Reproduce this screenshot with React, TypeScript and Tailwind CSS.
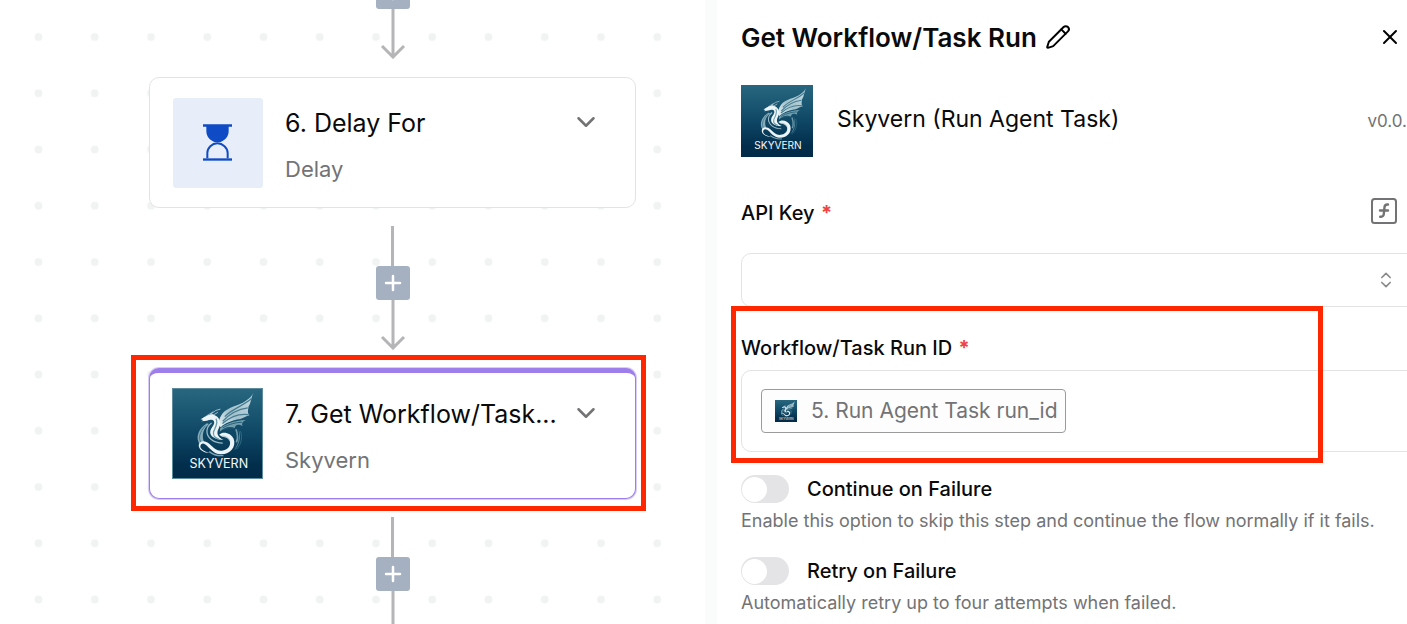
import React from 'react';
import { ChevronDown, ChevronsUpDown, Pencil, Plus, X } from 'lucide-react';

function SkyvernLogo({ className }: { className: string }) {
  return (
    <svg viewBox="0 0 270 270" className={className} role="img" aria-label="Skyvern">
      <defs>
        <linearGradient id="sky-bg" x1="0" y1="0" x2="0" y2="1">
          <stop offset="0" stopColor="#28677f" />
          <stop offset="0.5" stopColor="#0e4765" />
          <stop offset="0.85" stopColor="#022e4c" />
          <stop offset="1" stopColor="#022b48" />
        </linearGradient>
        <linearGradient id="sky-wing" x1="1" y1="0" x2="0" y2="1">
          <stop offset="0" stopColor="#c9dde4" />
          <stop offset="0.6" stopColor="#a3c2cd" />
          <stop offset="1" stopColor="#e9f3f6" />
        </linearGradient>
      </defs>
      <rect width="270" height="270" fill="url(#sky-bg)" />
      {/* ring behind the body */}
      <path d="M103 104C76 120 66 150 83 170C86 166 90 164 95 162C86 142 91 121 109 106Z" fill="#86acba" />
      <path d="M99 111C80 130 76 150 86 164" fill="none" stroke="#3d768d" strokeWidth="3" />
      <path d="M198 119C208 145 204 168 184 187C200 165 203 142 198 119Z" fill="#54879b" />
      <path d="M191 122C197 139 197 152 192 162" fill="none" stroke="#6f9bab" strokeWidth="5" />
      <path d="M205 128C212 150 206 170 192 183" fill="none" stroke="#2f6a83" strokeWidth="3" />
      {/* wing */}
      <path d="M244 11C234 32 210 44 185 52C170 58 158 64 150 74C143 83 139 95 137 108L145 116C156 104 178 95 204 91C216 88 220 82 232 80C224 72 229 60 229 53C237 43 236 26 244 11Z" fill="url(#sky-wing)" />
      <path d="M238 29C211 53 178 60 157 84M227 57C197 61 172 74 151 98M229 78C200 74 174 84 150 105" fill="none" stroke="#477d91" strokeWidth="4" />
      <path d="M143 119C160 106 184 96 221 94C210 99 208 105 211 112C193 103 188 112 187 119C171 111 155 118 142 130Z" fill="#719eae" />
      <path d="M151 118C170 106 194 101 209 101M153 123C168 117 178 116 185 119" fill="none" stroke="#255d76" strokeWidth="3" />
      {/* head and neck */}
      <path d="M84 92L96 84L108 79L119 76L131 82C143 90 146 105 139 119C131 133 134 145 153 154C131 156 111 144 113 130C114 116 129 109 124 97C120 91 110 93 103 96L86 98L92 94Z" fill="#edf5f7" />
      <path d="M130 90C139 102 128 117 123 130C120 141 129 149 139 152" fill="none" stroke="#6e9cad" strokeWidth="4" />
      <path d="M101 82L122 69M112 78L130 65L144 61M122 79L136 71" fill="none" stroke="#e0edf1" strokeWidth="2" />
      <path d="M117 103C101 114 96 137 116 153C126 161 141 164 151 164" fill="none" stroke="#99b9c6" strokeWidth="4" />
      {/* coiled tail */}
      <path d="M140 139C151 127 176 133 184 151C193 176 173 199 145 198C122 197 112 178 98 168C88 162 83 168 83 176C86 187 103 192 113 194C97 195 77 186 78 170C81 155 99 156 110 166C124 179 132 188 148 187C167 186 177 171 172 157C167 144 151 149 140 139Z" fill="#edf4f7" />
      <path d="M110 190C122 200 139 203 153 202" fill="none" stroke="#7ba4b5" strokeWidth="4" />
      <path d="M148 143C161 142 169 149 173 158" fill="none" stroke="#9dbdca" strokeWidth="3" />
      <text x="139" y="240" textAnchor="middle" fontSize="38" fill="#f4f8fa" className="font-['Inter',sans-serif]">
        SKYVERN
      </text>
    </svg>
  );
}

function Hourglass() {
  return (
    <svg viewBox="0 0 87 109" className="h-[37px] w-[29px] text-[#0f4bc4]" aria-hidden="true">
      <path d="M0 0H87V7H77V20C77 38 65 48 51 54H36C22 48 10 38 10 20V7H0Z" fill="currentColor" />
      <path d="M13 102V86C13 70 27 57 43 57S74 70 74 86V102" fill="none" stroke="currentColor" strokeWidth="6" />
      <path d="M0 102H87V109H0Z" fill="currentColor" />
    </svg>
  );
}

function FunctionIcon() {
  return (
    <svg viewBox="0 0 26 26" className="size-[26px]" fill="none" stroke="currentColor" strokeWidth="2" strokeLinecap="round" aria-hidden="true">
      <rect x="1" y="1" width="24" height="24" rx="2.5" />
      <path d="M17 6.5h-.8c-1.7 0-2.5.9-2.7 2.6l-.7 6.9c-.2 1.7-1 2.7-2.6 2.7h-1M9 12.5h8" strokeWidth="2.4" />
    </svg>
  );
}

function DotGrid() {
  return (
    <svg className="absolute inset-0 size-full" aria-hidden="true">
      <pattern id="dots" x="10.4" y="8.9" width="56.25" height="56.25" patternUnits="userSpaceOnUse">
        <circle cx="28.1" cy="28.1" r="3.9" fill="#f1f3f3" />
      </pattern>
      <rect width="100%" height="100%" fill="url(#dots)" />
    </svg>
  );
}

function Edge() {
  return (
    <div className="flex h-[124px] flex-col items-center">
      <div className="h-10 w-[3px] bg-[#b5b5b8]" />
      <button type="button" aria-label="Add step" className="flex size-[34px] items-center justify-center rounded-[3px] bg-[#a5b0c0] text-white">
        <Plus className="size-6" strokeWidth={2.5} />
      </button>
      <svg viewBox="0 0 26 50" className="h-[50px] w-[26px]" fill="none" stroke="#b5b5b8" strokeWidth="3" aria-hidden="true">
        <path d="M13 0V48M2 37L13 48L24 37" />
      </svg>
    </div>
  );
}

type StepCardProps = {
  title: string;
  piece: string;
  icon: React.ReactNode;
  selected?: boolean;
};

function StepCard({ title, piece, icon, selected }: StepCardProps) {
  return (
    <div className="relative w-full">
      <div
        className={
          selected
            ? 'flex h-[131px] overflow-hidden rounded-[10px] border border-t-[5px] border-[#9e7eea] bg-white px-[22px] pt-[15px] shadow-[0_0_0_1px_#d9cdf8]'
            : 'flex h-[131px] rounded-[10px] border border-[#e2e3e4] bg-white px-[22px] pt-[19px]'
        }
      >
        <div className="flex size-[91px] shrink-0 items-center justify-center">{icon}</div>
        <div className="ml-[22px] flex min-w-0 flex-1 flex-col gap-3 pt-[10px]">
          <h3 className="truncate text-[25px] leading-8 text-[#0a0a0b]">{title}</h3>
          <p className="text-[22px] leading-9 text-[#737375]">{piece}</p>
        </div>
        <button type="button" aria-label="Step menu" className="mr-3 flex h-[50px] shrink-0 items-center text-[#737375]">
          <ChevronDown className="size-[30px]" />
        </button>
      </div>
      {selected && <div className="pointer-events-none absolute -top-[13px] -right-[10px] -bottom-3 -left-[18px] border-[5px] border-[#ff2600]" />}
    </div>
  );
}

function RequiredMark() {
  return <span className="ml-px font-bold text-[#ef4444]">*</span>;
}

function ToggleField({ id, label, hint }: { id: string; label: string; hint: string }) {
  return (
    <div>
      <div className="flex items-center gap-[18px]">
        <input
          id={id}
          type="checkbox"
          role="switch"
          className="flex h-7 w-12 appearance-none items-center rounded-full bg-[#e4e4e7] px-px before:block before:size-[25px] before:rounded-full before:bg-white checked:bg-[#6e41e2] checked:before:ml-auto"
        />
        <label htmlFor={id} className="text-xl leading-7 font-medium text-[#0a0a0b]">
          {label}
        </label>
      </div>
      <p className="mt-1 text-lg leading-7 whitespace-nowrap text-[#737375]">{hint}</p>
    </div>
  );
}

export default function App() {
  return (
    <div className="grid h-screen grid-cols-[47fr_12px_46fr] overflow-hidden bg-white font-['Inter',sans-serif]">
      <main className="relative min-w-0 overflow-hidden">
        <DotGrid />
        <div className="relative -mt-[65px] ml-[149px] flex w-[487px] flex-col items-center gap-[18px]">
          <Edge />
          <StepCard
            title="6. Delay For"
            piece="Delay"
            icon={
              <div className="flex size-[90px] items-center justify-center rounded-[3px] bg-[#e7eefa]">
                <Hourglass />
              </div>
            }
          />
          <Edge />
          <StepCard title="7. Get Workflow/Task..." piece="Skyvern" icon={<SkyvernLogo className="size-[91px] border border-[#5d8c9e]" />} selected />
          <Edge />
        </div>
      </main>

      <div className="bg-[#fafcfb]" />

      <aside className="min-w-0 overflow-hidden pt-4 pl-6">
        <header className="flex h-[42px] items-center pr-[5px]">
          <h1 className="pt-0.5 text-[26px] leading-8 font-semibold text-[#0a0a0b]">Get Workflow/Task Run</h1>
          <button type="button" aria-label="Rename step" className="ml-2">
            <Pencil className="size-[26px]" strokeWidth={1.8} />
          </button>
          <button type="button" aria-label="Close" className="ml-auto">
            <X className="size-6" />
          </button>
        </header>

        <div className="mt-[27px] flex items-center">
          <SkyvernLogo className="size-[72px]" />
          <h2 className="ml-6 pb-1 text-[23px] leading-8 text-[#0a0a0b]">Skyvern (Run Agent Task)</h2>
          <span className="ml-auto text-[17px] leading-7 text-[#737375]">v0.0.</span>
        </div>

        <div className="mt-10 flex h-7 items-center justify-between pr-[10px]">
          <label htmlFor="api-key" className="pt-1 text-xl leading-7 font-medium text-[#0a0a0b]">
            API Key <RequiredMark />
          </label>
          <button type="button" aria-label="Use dynamic value" className="text-[#737375]">
            <FunctionIcon />
          </button>
        </div>
        <div className="relative mt-7 -mr-4">
          <select id="api-key" className="block h-[54px] w-full appearance-none rounded-[10px] border border-[#e2e3e4] bg-white px-5 text-xl">
            <option value=""></option>
          </select>
          <ChevronsUpDown className="pointer-events-none absolute top-[17px] right-[27px] size-5 text-[#8a8a8c]" />
        </div>

        <section className="relative pt-[27px]">
          <label htmlFor="run-id" className="block text-xl leading-7 font-medium text-[#0a0a0b]">
            Workflow/Task Run ID <RequiredMark />
          </label>
          <div className="mt-2 -mr-4 flex h-[82px] items-center rounded-[10px] border border-[#e2e3e4] px-[19px]">
            <span className="flex h-11 shrink-0 items-center gap-[14px] rounded-[4px] border border-[#9b9b9d] bg-[#fdfdfd] pr-2 pl-[13px] text-[21px] leading-8 text-[#737375]">
              <SkyvernLogo className="size-[22px]" />
              5. Run Agent Task run_id
            </span>
            <input id="run-id" type="text" className="ml-2 h-11 min-w-0 flex-1 bg-transparent text-xl outline-none" />
          </div>
          <div className="pointer-events-none absolute -top-px right-[84px] -bottom-[11px] -left-[10px] border-[5px] border-[#ff2600]" />
        </section>

        <div className="mt-[23px] flex flex-col gap-[22px]">
          <ToggleField id="continue" label="Continue on Failure" hint="Enable this option to skip this step and continue the flow normally if it fails." />
          <ToggleField id="retry" label="Retry on Failure" hint="Automatically retry up to four attempts when failed." />
        </div>
      </aside>
    </div>
  );
}
